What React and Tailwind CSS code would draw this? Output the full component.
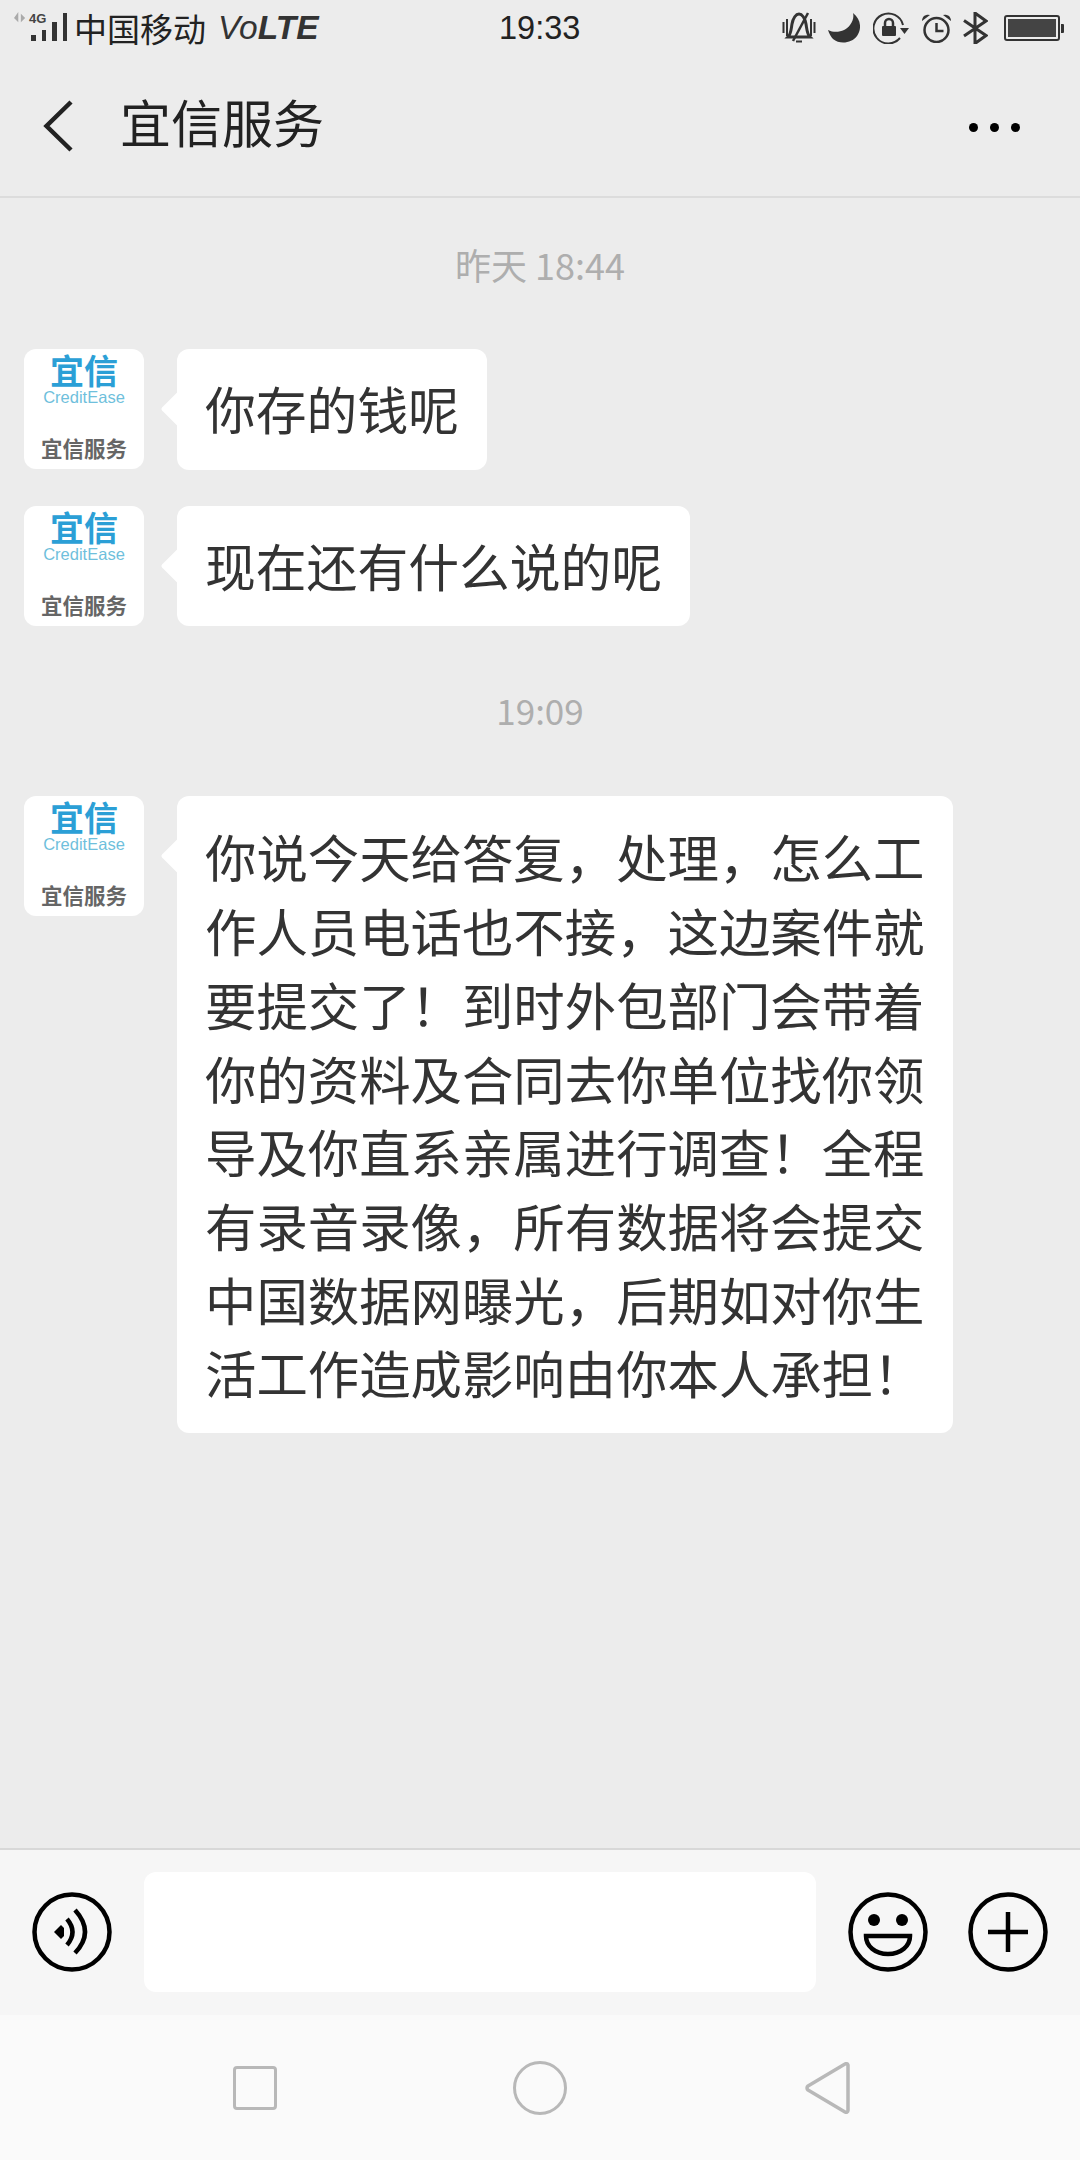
const CJK = { fontFamily: '"Noto Sans CJK SC","Liberation Sans",sans-serif' };
const LAT = { fontFamily: '"Liberation Sans",sans-serif' };

function Avatar() {
  return (
    <div className="w-[120px] h-[120px] shrink-0 rounded-[12px] bg-white flex flex-col items-center" style={CJK}>
      <div className="text-[34px] leading-[36px] mt-[3px] font-bold text-[#2b9fd6]">宜信</div>
      <div className="text-[16.5px] leading-[16px] mt-[1px] text-[#6fbfdc]" style={LAT}>CreditEase</div>
      <div className="text-[21.5px] leading-[28px] mt-[29px] font-bold text-[#666666]">宜信服务</div>
    </div>
  );
}

function Message({ children, sizeClass }) {
  return (
    <div className="flex items-start">
      <Avatar />
      <div className={"relative ml-[33px] rounded-[12px] bg-white px-[28px] pt-[23px] pb-[24px] leading-[73.7px] text-[#333333] " + sizeClass} style={CJK}>
        <span className="absolute left-[-11px] top-[47px] w-[26px] h-[26px] rotate-45 bg-white rounded-[2px]" />
        <div className="relative">{children}</div>
      </div>
    </div>
  );
}

function StatusIcons() {
  return (
    <div className="flex items-center">
      <svg width="34" height="32" viewBox="0 0 34 32" fill="none" stroke="#333" strokeWidth="3">
        <path d="M1.500 10v11M5 7v17M29 7v17M32.500 10v11" strokeWidth="2" />
        <path d="M6 25c3-3 3-7 4-13 1-6 4-10 7-10s6 4 7 10c1 6 1 10 4 13z" />
        <path d="M26 1L11 29" strokeWidth="2.5" />
        <path d="M14 29.500h6" strokeWidth="2" />
      </svg>
      <svg className="ml-[12px]" width="32" height="30" viewBox="0 0 32 30" fill="#333">
        <path d="M25 0C33 6 34 16 29 23 24 30 12 32 5 26 3 24 1 20 0 17 8 21 18 18 22 12 25 8 26 4 25 0z" />
      </svg>
      <svg className="ml-[13px]" width="36" height="32" viewBox="0 0 36 32" fill="none" stroke="#333" strokeWidth="2">
        <path d="M30 13A15 15 0 1 0 27 26" />
        <rect x="9" y="14" width="14" height="10" rx="1" fill="#333" stroke="none" />
        <path d="M12 15v-4a4 4 0 0 1 8 0v4" strokeWidth="2.500" />
        <path d="M27 16h9l-4.500 6z" fill="#333" stroke="none" />
      </svg>
      <svg className="ml-[12px]" width="31" height="30" viewBox="0 0 31 30" fill="none" stroke="#333" strokeWidth="2.5">
        <circle cx="15.500" cy="17" r="12" />
        <path d="M15.500 10v8h7" />
        <path d="M1 8a6 6 0 0 1 8-6zM30 8a6 6 0 0 0-8-6z" fill="#333" stroke="none" />
      </svg>
      <svg className="ml-[11px]" width="25" height="32" viewBox="0 0 25 32" fill="none" stroke="#333" strokeWidth="3">
        <path d="M1 8.500l22 15-11 8V1l11 8L1 24" />
      </svg>
      <div className="ml-[16px] w-[56px] h-[26px] rounded-[3px] border-[2px] border-[#333333] p-[2px]">
        <div className="w-full h-full bg-[#444444]" />
      </div>
      <div className="w-[3px] h-[9px] bg-[#333333] ml-[1px] rounded-r-[1px]" />
    </div>
  );
}

export default function App() {
  return (
    <div className="w-[1080px] h-[2160px] flex flex-col bg-[#ececec] overflow-hidden">
      <div className="h-[198px] shrink-0 border-b-[2px] border-[#dcdcdc] flex flex-col">
        <div className="relative h-[56px] flex items-center justify-between pr-[16px]">
          <div className="flex items-center">
            <div className="relative ml-[12px] w-[56px] h-[34px]">
              <svg className="absolute left-[1px] top-[1px]" width="14" height="12" viewBox="0 0 14 14" fill="#aaa">
                <path d="M5 0v12L0 7zM8 2l5 5-5 5z" />
              </svg>
              <span className="absolute left-[17px] top-[1px] text-[13px] leading-[14px] font-bold text-[#444444]" style={LAT}>4G</span>
              <div className="absolute left-[19px] top-[2px] flex items-end gap-[6px] h-[28px]">
                <span className="w-[4.5px] h-[6px] bg-[#333333]" />
                <span className="w-[4.5px] h-[11px] bg-[#333333]" />
                <span className="w-[4.5px] h-[19px] bg-[#333333]" />
                <span className="w-[4.5px] h-[28px] bg-[#333333]" />
              </div>
            </div>
            <span className="ml-[6px] text-[33px] leading-[40px] text-[#222222]" style={CJK}>中国移动</span>
            <span className="ml-[12px] text-[33.5px] leading-[40px] italic text-[#333333]" style={LAT}>
              Vo<span className="font-bold">LTE</span>
            </span>
          </div>
          <span className="absolute left-[499px] top-[8px] text-[32.5px] leading-[40px] text-[#222222]" style={LAT}>19:33</span>
          <StatusIcons />
        </div>
        <div className="flex-1 flex items-center justify-between pb-[10px]">
          <div className="flex items-center">
            <svg className="ml-[43px] mt-[9px]" width="30" height="52" viewBox="0 0 30 52" fill="none" stroke="#222" strokeWidth="4.5">
              <path d="M28 2L3.500 26 28 50" />
            </svg>
            <span className="ml-[47px] text-[51px] leading-[60px] text-[#222222]" style={CJK}>宜信服务</span>
          </div>
          <div className="flex items-center gap-[12px] mr-[60px] mt-[12px]">
            <span className="w-[9px] h-[9px] rounded-full bg-black" />
            <span className="w-[9px] h-[9px] rounded-full bg-black" />
            <span className="w-[9px] h-[9px] rounded-full bg-black" />
          </div>
        </div>
      </div>

      <div className="flex-1 flex flex-col pl-[24px]">
        <div className="mt-[46px] pr-[24px] text-center text-[36px] leading-[40px] text-[#aeaeae]" style={CJK}>昨天 18:44</div>
        <div className="mt-[65px] flex flex-col gap-[36px]">
          <Message sizeClass="text-[50.8px]">你存的钱呢</Message>
          <Message sizeClass="text-[50.8px]">现在还有什么说的呢</Message>
        </div>
        <div className="mt-[64px] pr-[24px] text-center text-[35px] leading-[40px] text-[#aeaeae]" style={CJK}>19:09</div>
        <div className="mt-[66px]">
          <Message sizeClass="text-[51.4px]">
            <div className="w-[720px]">
              <div>你说今天给答复，处理，怎么工</div>
              <div>作人员电话也不接，这边案件就</div>
              <div>要提交了！到时外包部门会带着</div>
              <div>你的资料及合同去你单位找你领</div>
              <div>导及你直系亲属进行调查！全程</div>
              <div>有录音录像，所有数据将会提交</div>
              <div>中国数据网曝光，后期如对你生</div>
              <div>活工作造成影响由你本人承担！</div>
            </div>
          </Message>
        </div>
      </div>

      <div className="h-[167px] shrink-0 border-t-[2px] border-[#d8d8d8] bg-[#f6f6f6] flex items-center pb-[1px]">
        <svg className="ml-[32px]" width="80" height="80" viewBox="0 0 80 80" fill="none" stroke="#000" strokeWidth="4.5">
          <circle cx="40" cy="40" r="37.500" />
          <path d="M22 40l7-7 3 3v8l-3 3z" fill="#000" stroke="none" />
          <path d="M35 27Q46 40 35 53" />
          <path d="M43 18Q63 40 43 61" />
        </svg>
        <div className="ml-[32px] w-[672px] h-[120px] rounded-[12px] bg-white" />
        <svg className="ml-[32px]" width="80" height="80" viewBox="0 0 80 80" fill="none" stroke="#000" strokeWidth="4.5">
          <circle cx="40" cy="40" r="37.500" />
          <circle cx="26" cy="28" r="6" fill="#000" stroke="none" />
          <circle cx="54" cy="28" r="6" fill="#000" stroke="none" />
          <path d="M18 44h44c0 10-9 18-22 18s-22-8-22-18z" />
        </svg>
        <svg className="ml-[40px]" width="80" height="80" viewBox="0 0 80 80" fill="none" stroke="#000" strokeWidth="4.5">
          <circle cx="40" cy="40" r="37.500" />
          <path d="M20 40h40M40 20v40" />
        </svg>
      </div>

      <div className="h-[145px] shrink-0 bg-[#fafafa] flex items-center">
        <div className="ml-[233px] w-[44px] h-[44px] rounded-[4px] border-[3px] border-[#b8b8b8]" />
        <div className="ml-[236px] w-[54px] h-[54px] rounded-full border-[3px] border-[#b8b8b8]" />
        <svg className="ml-[237px]" width="48" height="52" viewBox="0 0 48 52" fill="none" stroke="#b8b8b8" strokeWidth="3.5" strokeLinejoin="round">
          <path d="M44 3a2 2 0 0 0-3-1L4 24a2.500 2.500 0 0 0 0 4l37 22a2 2 0 0 0 3-1.500z" />
        </svg>
      </div>
    </div>
  );
}
